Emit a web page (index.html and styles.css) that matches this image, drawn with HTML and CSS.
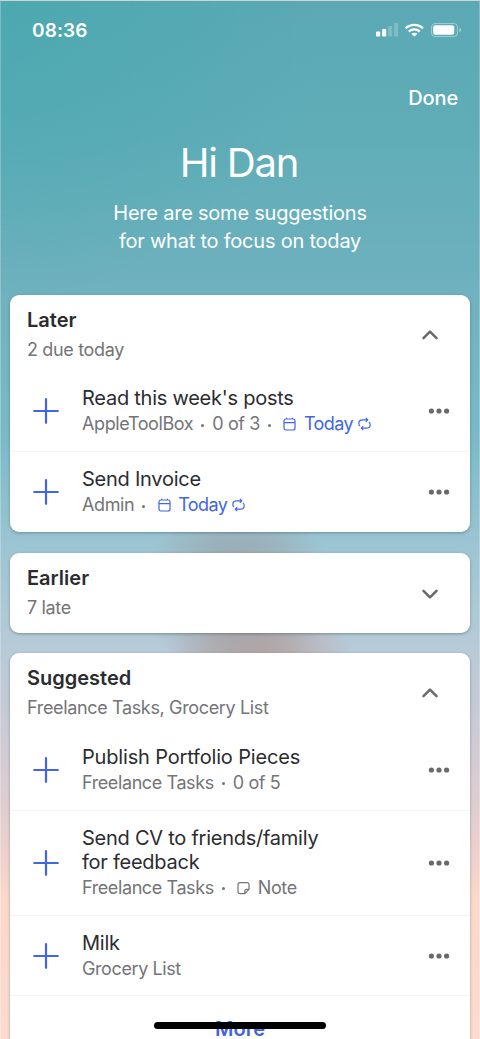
FILE: index.html
```
<!DOCTYPE html>
<html lang="en">
<head>
<meta charset="utf-8">
<title>Suggestions</title>
<link rel="stylesheet" href="styles.css">
</head>
<body>
<svg class="defs" width="0" height="0">
  <symbol id="plus" viewBox="0 0 26 26"><path d="M13 1.200v23.600M1.200 13h23.600"/></symbol>
  <symbol id="up" viewBox="0 0 18 12"><path d="M2.500 9.200 9 2.600l6.500 6.600"/></symbol>
  <symbol id="down" viewBox="0 0 18 12"><path d="M2.500 2.800 9 9.400l6.500-6.600"/></symbol>
  <symbol id="more" viewBox="0 0 22 6"><circle cx="3.400" cy="3" r="2.600"/><circle cx="11" cy="3" r="2.600"/><circle cx="18.600" cy="3" r="2.600"/></symbol>
  <symbol id="calendar" viewBox="0 0 13 14"><rect x="1" y="2" width="11" height="11" rx="2"/><path d="M1 5.600h11M3.600 2V.8M9.400 2V.8"/></symbol>
  <symbol id="repeat" viewBox="0 0 13 14"><path d="M7.800.8 9.800 2.800 7.800 4.800M9.800 2.800H4.400C2.200 2.800.8 4.200.8 6.200c0 1.300.4 2.200 1.200 3M5.200 9.200l-2 2 2 2M3.200 11.200h5.400c2.200 0 3.600-1.400 3.600-3.400 0-1.300-.4-2.200-1.200-3"/></symbol>
  <symbol id="note" viewBox="0 0 13 14"><path d="M3 1.600h7a2 2 0 0 1 2 2v4.800l-4.200 4.200H3a2 2 0 0 1-2-2v-7a2 2 0 0 1 2-2ZM12 8.400H9.600a1.800 1.800 0 0 0-1.800 1.800v2.400"/></symbol>
</svg>
<div class="screen">
  <header class="status">
    <span class="time">08:36</span>
    <svg class="indicators" width="86" height="16" viewBox="0 0 86 16">
      <g fill="#fff">
        <rect x="0" y="9.500" width="4.200" height="5" rx="1"/>
        <rect x="6" y="7" width="4.200" height="7.500" rx="1"/>
        <g opacity=".22"><rect x="12" y="4" width="4.200" height="10.500" rx="1"/><rect x="18" y="1" width="4.200" height="13.500" rx="1"/></g>
        <path d="m38.300 14.800-3-3c1.700-1.500 4.300-1.500 6 0Z"/>
      </g>
      <g fill="none" stroke="#fff" stroke-width="2.300"><path d="M32.800 9.600c3-2.900 8-2.900 11 0M29.700 6.300c4.800-4.600 12.400-4.600 17.200 0"/></g>
      <rect x="55.500" y="1.500" width="26" height="13" rx="3.500" fill="none" stroke="#fff" stroke-opacity=".4"/>
      <rect x="57.200" y="3.200" width="21" height="9.600" rx="2" fill="#fff"/>
      <path d="M83.500 5.800v4.400c1-.4 1.600-1.200 1.600-2.200s-.6-1.800-1.600-2.200Z" fill="#fff" fill-opacity=".5"/>
    </svg>
  </header>
  <div class="nav"><span class="done">Done</span></div>
  <h1 class="greeting">Hi Dan</h1>
  <p class="intro">Here are some suggestions<br>for what to focus on today</p>

  <main class="cards">
    <section class="card">
      <div class="card-head">
        <div><h2 class="card-title">Later</h2><p class="card-sub">2 due today</p></div>
        <svg class="chevron"><use href="#up"/></svg>
      </div>
      <div class="task">
        <svg class="plus"><use href="#plus"/></svg>
        <div class="task-body">
          <div class="task-title">Read this week's posts</div>
          <div class="meta"><span>AppleToolBox</span><i class="dot"></i><span>0 of 3</span><i class="dot"></i><span class="due"><svg class="mini"><use href="#calendar"/></svg><span>Today</span><svg class="mini"><use href="#repeat"/></svg></span></div>
        </div>
        <svg class="more"><use href="#more"/></svg>
      </div>
      <div class="task">
        <svg class="plus"><use href="#plus"/></svg>
        <div class="task-body">
          <div class="task-title">Send Invoice</div>
          <div class="meta"><span>Admin</span><i class="dot"></i><span class="due"><svg class="mini"><use href="#calendar"/></svg><span>Today</span><svg class="mini"><use href="#repeat"/></svg></span></div>
        </div>
        <svg class="more"><use href="#more"/></svg>
      </div>
    </section>

    <section class="card">
      <div class="card-head collapsed">
        <div><h2 class="card-title">Earlier</h2><p class="card-sub">7 late</p></div>
        <svg class="chevron"><use href="#down"/></svg>
      </div>
    </section>

    <section class="card last">
      <div class="card-head">
        <div><h2 class="card-title">Suggested</h2><p class="card-sub">Freelance Tasks, Grocery List</p></div>
        <svg class="chevron"><use href="#up"/></svg>
      </div>
      <div class="task">
        <svg class="plus"><use href="#plus"/></svg>
        <div class="task-body">
          <div class="task-title wide">Publish Portfolio Pieces</div>
          <div class="meta"><span>Freelance Tasks</span><i class="dot"></i><span>0 of 5</span></div>
        </div>
        <svg class="more"><use href="#more"/></svg>
      </div>
      <div class="task">
        <svg class="plus"><use href="#plus"/></svg>
        <div class="task-body">
          <div class="task-title">Send CV to friends/family<br>for feedback</div>
          <div class="meta"><span>Freelance Tasks</span><i class="dot"></i><span class="note"><svg class="mini"><use href="#note"/></svg><span>Note</span></span></div>
        </div>
        <svg class="more"><use href="#more"/></svg>
      </div>
      <div class="task">
        <svg class="plus"><use href="#plus"/></svg>
        <div class="task-body">
          <div class="task-title">Milk</div>
          <div class="meta"><span>Grocery List</span></div>
        </div>
        <svg class="more"><use href="#more"/></svg>
      </div>
      <div class="show-more">More</div>
    </section>
  </main>
  <div class="home-bar"></div>
</div>
</body>
</html>
```
FILE: styles.css
```
* { box-sizing: border-box; margin: 0; padding: 0; }
body { font-family: Inter, "Liberation Sans", sans-serif; color: #2b2c30; overflow: hidden; }
.defs { position: absolute; }
.screen {
  position: relative;
  width: 480px;
  height: 1039px;
  overflow: hidden;
  background:
    radial-gradient(ellipse 95px 95px at 238px 590px, rgba(152,152,154,.9), rgba(152,152,154,.5) 45%, rgba(152,152,154,0)),
    radial-gradient(ellipse 95px 80px at 262px 670px, rgba(190,156,150,.9), rgba(190,156,150,0)),
    radial-gradient(ellipse 330px 300px at 0 0, rgba(70,168,174,.7), rgba(80,168,176,0)),
    linear-gradient(#5ba9b4 0, #60adb8 140px, #6fb1be 285px, #78bac6 430px, #9bc4d2 540px, #b5cad8 640px, #cbcad4 730px, #e6cfcf 830px, #fcd8cb 900px, #fddacf 1039px);
  border-top: 1px solid rgba(190,210,215,.7);
  box-shadow: inset 1px 0 rgba(255,255,255,.25), inset -1px 0 rgba(255,255,255,.25);
}
.status { display: flex; justify-content: space-between; align-items: center; height: 58px; padding: 0 18px 0 32px; color: #fff; }
.time { font-size: 19px; font-weight: 600; letter-spacing: .1px; }
.nav { display: flex; justify-content: flex-end; height: 78px; padding: 26px 22px 0; color: #fff; font-size: 20px; line-height: 26px; font-weight: 500; letter-spacing: -.15px; }
.greeting { height: 62px; padding-right: 2px; color: #fff; font-size: 40px; line-height: 52px; font-weight: 400; text-align: center; letter-spacing: -1.200px; }
.intro { height: 95.500px; color: #fff; font-size: 20px; line-height: 28px; text-align: center; letter-spacing: -.22px; }
.cards { display: flex; flex-direction: column; gap: 20.500px; padding: 0 10px; }
.card { flex: none; background: #fff; border-radius: 9px; box-shadow: 0 1px 3px rgba(40,60,70,.4); }
.last { height: 420px; }
.card-head { display: flex; justify-content: space-between; align-items: flex-start; height: 76.500px; padding: 12px 31px 0 17px; }
.collapsed { height: 80px; }
.card-title { font-size: 20px; line-height: 27px; font-weight: 600; }
.card-sub { margin-top: 3px; font-size: 18px; line-height: 26px; color: #747477; letter-spacing: -.35px; }
.chevron { width: 18px; height: 12px; margin-top: 22px; fill: none; stroke: #69696c; stroke-width: 2.500; stroke-linecap: round; stroke-linejoin: round; }
.collapsed .chevron { margin-top: 23px; }
.task { display: flex; align-items: center; padding: 15px 20px 15px 23px; }
.task:nth-child(4) { padding-bottom: 14px; }
.card:first-child .task, .task:nth-child(2) { padding-bottom: 15px; }
.task + .task, .show-more { border-top: 1px solid #f4f4f5; }
.plus { flex: none; width: 26px; height: 26px; stroke: #4265e6; stroke-width: 2.200; stroke-linecap: round; }
.task-body { flex: 1; margin-left: 23px; }
.task-title { font-size: 20px; line-height: 24px; white-space: nowrap; letter-spacing: -.25px; }
.wide { letter-spacing: -.17px; }
.meta { display: flex; align-items: center; margin-top: 2px; height: 24px; font-size: 18px; line-height: 24px; color: #747477; white-space: nowrap; letter-spacing: -.4px; }
.dot { width: 3px; height: 3px; margin: 2px 8px 0; border-radius: 50%; background: #747477; }
.due, .note { display: flex; align-items: center; gap: 7.500px; margin-left: 4.500px; }
.due { color: #4265e6; letter-spacing: -.6px; }
.due span + .mini { margin-left: -2.500px; }
.mini { width: 13px; height: 14px; fill: none; stroke: currentColor; stroke-width: 1.200; stroke-linejoin: round; }
.more { flex: none; width: 22px; height: 6px; fill: #69696c; }
.show-more { padding-top: 20px; text-align: center; color: #4265e6; font-size: 20px; line-height: 26px; font-weight: 600; }
.home-bar { position: absolute; left: 154px; top: 1021px; width: 172px; height: 7px; border-radius: 4px; background: #000; }
```
